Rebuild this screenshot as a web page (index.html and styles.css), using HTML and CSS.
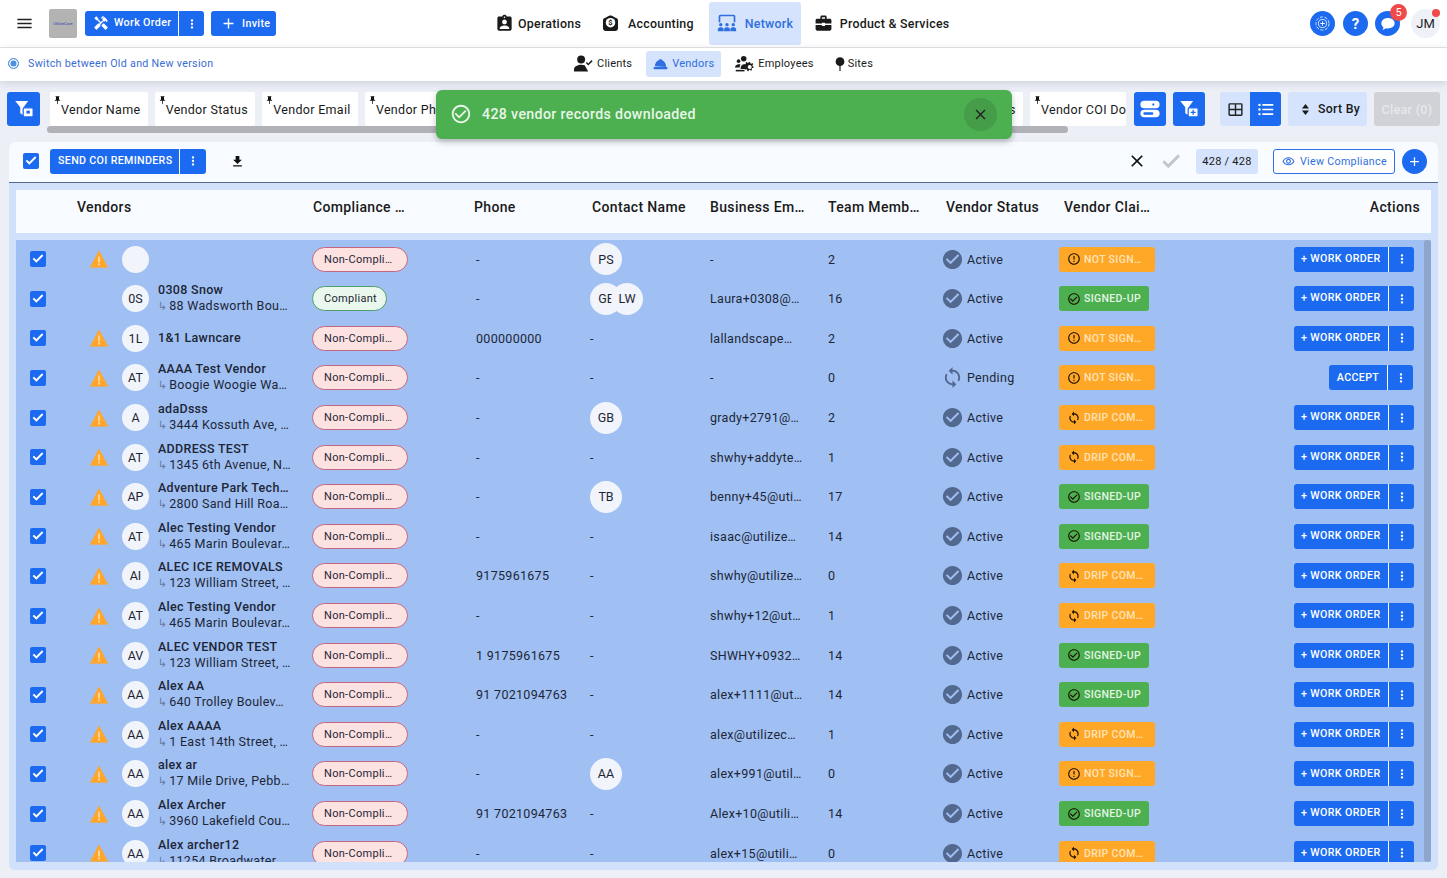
FILE: index.html
```html
<!DOCTYPE html>
<html lang="en">
<head>
<meta charset="utf-8">
<title>Vendors</title>
<link rel="stylesheet" href="styles.css">
</head>
<body>
<svg class="defs" width="0" height="0" aria-hidden="true">
  <symbol id="i-menu" viewBox="0 0 24 24"><path d="M3 18h18v-2H3v2zm0-5h18v-2H3v2zm0-7v2h18V6H3z"/></symbol>
  <symbol id="i-tools" viewBox="0 0 24 24"><path d="M21.67 18.17l-5.3-5.3h-.99l-2.54 2.54v.99l5.3 5.3c.39.39 1.02.39 1.41 0l2.12-2.12c.39-.38.39-1.02 0-1.41z"/><path d="M17.34 10.19l1.41-1.41 2.12 2.12c1.17-1.17 1.17-3.07 0-4.24l-3.54-3.54-1.41 1.41V1.71l-.7-.71-3.54 3.54.71.71h2.83l-1.41 1.41 1.06 1.06-2.89 2.89-4.13-4.13V5.06L4.83 2.04 2 4.87 5.03 7.9h1.41l4.13 4.13-.85.85H7.61l-5.3 5.3c-.39.39-.39 1.02 0 1.41l2.12 2.12c.39.39 1.02.39 1.41 0l5.3-5.3v-2.12l5.15-5.15 1.05 1.05z"/></symbol>
  <symbol id="i-more" viewBox="0 0 24 24"><path d="M12 8c1.1 0 2-.9 2-2s-.9-2-2-2-2 .9-2 2 .9 2 2 2zm0 2c-1.1 0-2 .9-2 2s.9 2 2 2 2-.9 2-2-.9-2-2-2zm0 6c-1.1 0-2 .9-2 2s.9 2 2 2 2-.9 2-2-.9-2-2-2z"/></symbol>
  <symbol id="i-plus" viewBox="0 0 24 24"><path d="M19 13h-6v6h-2v-6H5v-2h6V5h2v6h6v2z"/></symbol>
  <symbol id="i-clip" viewBox="0 0 24 24"><path d="M19 3h-4.18C14.4 1.84 13.3 1 12 1c-1.3 0-2.4.84-2.82 2H5c-1.1 0-2 .9-2 2v14c0 1.1.9 2 2 2h14c1.1 0 2-.9 2-2V5c0-1.1-.9-2-2-2zm-7 0c.55 0 1 .45 1 1s-.45 1-1 1-1-.45-1-1 .45-1 1-1zm0 4c1.66 0 3 1.34 3 3s-1.34 3-3 3-3-1.34-3-3 1.34-3 3-3zm6 12H6v-1.4c0-2 4-3.1 6-3.1s6 1.1 6 3.1V19z"/></symbol>
  <symbol id="i-money" viewBox="0 0 24 24"><path d="M5 5l3-1.6C9 2.8 10.500 2 12 2s3 .8 4 1.400L19 5c1.500.2 2.500 1.300 2.500 2.800V18c0 2-1.500 3.500-3.500 3.500H6C4 21.500 2.500 20 2.500 18V7.800C2.500 6.300 3.500 5.200 5 5z"/><circle cx="12" cy="11" r="6" fill="#fff"/><text x="12" y="14.500" font-size="9.500" font-weight="700" text-anchor="middle" font-family="Roboto, sans-serif">$</text></symbol>
  <symbol id="i-network" viewBox="0 0 24 24"><path d="M2 11V4a2 2 0 0 1 2-2h16a2 2 0 0 1 2 2v7h-2V4H4v7z"/><circle cx="4.500" cy="14" r="2"/><circle cx="12" cy="14" r="2"/><circle cx="19.500" cy="14" r="2"/><path d="M1 22v-2a3 3 0 0 1 3-3h1a3 3 0 0 1 3 3v2zM8.500 22v-2a3 3 0 0 1 3-3h1a3 3 0 0 1 3 3v2zM16 22v-2a3 3 0 0 1 3-3h1a3 3 0 0 1 3 3v2z"/></symbol>
  <symbol id="i-case" viewBox="0 0 24 24"><path d="M20 6h-4V4c0-1.100-.9-2-2-2h-4c-1.100 0-2 .9-2 2v2H4c-1.100 0-2 .9-2 2v4h8v-1h4v1h8V8c0-1.100-.9-2-2-2zM10 4h4v2h-4V4zM2 14v5c0 1.100.9 2 2 2h16c1.100 0 2-.9 2-2v-5h-8v1h-4v-1z"/></symbol>
  <symbol id="i-client" viewBox="0 0 24 24"><circle cx="9" cy="7" r="5"/><path d="M0 22v-3c0-3.300 5-5.500 9-5.500 1.500 0 3 .3 4.500.8L18 22z"/><path d="M15 11.500l1.300-1.300 1.700 1.700 4.200-4.200 1.300 1.300-5.500 5.500z"/></symbol>
  <symbol id="i-hat" viewBox="0 0 24 24"><path d="M3 16.500C3 11.500 6 7.500 10 6.300V5h4v1.300c4 1.200 7 5.200 7 11.200z"/><rect x="1" y="17.500" width="22" height="3.500" rx="1"/></symbol>
  <symbol id="i-team" viewBox="0 0 24 24"><circle cx="11" cy="6" r="3.500"/><circle cx="4.500" cy="9" r="2.300"/><path d="M0 17c0-2.500 2-4.200 5-4.200 1 0 1.700.2 2 .4-.8 1-1 2.400-1 3.800z"/><path d="M7 19c0-3.500 2-6 4.500-6H14l-1 6z"/><path d="M1 20h11v2H1z"/><path fill-rule="evenodd" d="M18 10l1 .2.3 1.500 1.400.6 1.300-.8 1 1.300-1 1.100.2 1.500 1.300.6-.3 1.600h-1.500l-.8 1.300.7 1.300-1.400.9-1.100-1.100-1.500.3-.6 1.400-1.600-.3v-1.500l-1.300-.8-1.300.7-.9-1.400 1.100-1.100-.3-1.500-1.400-.6.3-1.600h1.500l.8-1.300-.7-1.300 1.400-.9 1.100 1.100 1.100-.2zm.6 4a2.500 2.500 0 1 0 .01 0z"/></symbol>
  <symbol id="i-pin" viewBox="0 0 24 24"><circle cx="12" cy="8" r="7.500"/><rect x="11" y="12" width="2" height="12"/></symbol>
  <symbol id="i-push" viewBox="0 0 24 24"><path d="M16 9V4h1V2H7v2h1v5c0 1.660-1.340 3-3 3v2h6v8l1 1 1-1v-8h6v-2c-1.660 0-3-1.340-3-3z"/></symbol>
  <symbol id="i-flock" viewBox="0 0 24 24"><path d="M1.500 2.500H17l-5.500 7.500v9.500l-4-2.500V10z"/><rect x="11" y="10.500" width="12" height="11" rx="1.500" stroke="#1b6af0" stroke-width="1.500"/><rect x="15" y="14" width="4" height="3.500" fill="#1b6af0"/></symbol>
  <symbol id="i-fplus" viewBox="0 0 24 24"><path d="M1.500 2.500H17l-5.500 7.500v9.500l-4-2.500V10z"/><rect x="11" y="10.500" width="12" height="11" rx="1.500" stroke="#1b6af0" stroke-width="1.500"/><path fill="#1b6af0" d="M16.200 13h1.600v2.200H20v1.600h-2.200V19h-1.600v-2.200H14v-1.600h2.200z"/></symbol>
  <symbol id="i-rows" viewBox="0 0 24 24"><path fill-rule="evenodd" d="M5 2h14a4 4 0 0 1 0 9H5a4 4 0 0 1 0-9zm11 3.200a1.300 1.300 0 1 0 .01 0zM5 13h14a4 4 0 0 1 0 9H5a4 4 0 0 1 0-9zm.5 3a1.500 1.500 0 0 0 0 3h9a1.500 1.500 0 0 0 0-3z"/></symbol>
  <symbol id="i-grid" viewBox="0 0 24 24"><path fill-rule="evenodd" d="M4 3h16a2 2 0 0 1 2 2v14a2 2 0 0 1-2 2H4a2 2 0 0 1-2-2V5a2 2 0 0 1 2-2zm0 2v6h7V5zm9 0v6h7V5zM4 13v6h7v-6zm9 0v6h7v-6z"/></symbol>
  <symbol id="i-list" viewBox="0 0 24 24"><circle cx="3.500" cy="5.500" r="1.700"/><circle cx="3.500" cy="12" r="1.700"/><circle cx="3.500" cy="18.500" r="1.700"/><path d="M7.500 4.300H23v2.400H7.500zM7.500 10.800H23v2.400H7.500zM7.500 17.300H23v2.400H7.500z"/></symbol>
  <symbol id="i-sort" viewBox="0 0 24 24"><path d="M12 2l6.500 8h-13zM12 22l-6.500-8h13z"/></symbol>
  <symbol id="i-down" viewBox="0 0 24 24"><path d="M19 9h-4V3H9v6H5l7 7 7-7zM5 18v2h14v-2H5z"/></symbol>
  <symbol id="i-close" viewBox="0 0 24 24"><path d="M19 6.410L17.590 5 12 10.590 6.410 5 5 6.410 10.590 12 5 17.590 6.410 19 12 13.410 17.590 19 19 17.590 13.410 12z"/></symbol>
  <symbol id="i-check" viewBox="0 0 24 24"><path d="M9 16.170L4.830 12l-1.420 1.410L9 19 21 7l-1.410-1.410z" stroke="currentColor" stroke-width="1.200"/></symbol>
  <symbol id="i-box" viewBox="0 0 24 24"><rect x="0" y="0" width="24" height="24" rx="3"/><path fill="#fff" d="M9.500 17.500L4 12l2-2 3.500 3.500L18 5l2 2z"/></symbol>
  <symbol id="i-eye" viewBox="0 0 24 24"><path d="M12 6c3.790 0 7.170 2.130 8.820 5.500C19.170 14.870 15.790 17 12 17s-7.170-2.130-8.820-5.500C4.830 8.130 8.210 6 12 6m0-2C7 4 2.730 7.110 1 11.500 2.730 15.890 7 19 12 19s9.270-3.110 11-7.500C21.270 7.110 17 4 12 4zm0 5c1.380 0 2.500 1.120 2.500 2.500S13.380 14 12 14s-2.500-1.120-2.500-2.500S10.620 9 12 9m0-2c-2.480 0-4.500 2.020-4.500 4.500S9.520 16 12 16s4.500-2.020 4.500-4.500S14.480 7 12 7z"/></symbol>
  <symbol id="i-warn" viewBox="0 0 24 24"><path d="M12 1.500L.5 23h23z" stroke="currentColor" stroke-width="1" stroke-linejoin="round"/><path fill="#ffd596" d="M10.700 8.500h2.600v8h-2.600zM10.700 18h2.600v2.600h-2.600z"/></symbol>
  <symbol id="i-ok" viewBox="0 0 24 24"><path d="M12 2C6.480 2 2 6.480 2 12s4.480 10 10 10 10-4.480 10-10S17.520 2 12 2zm-2 15l-5-5 1.410-1.410L10 14.170l7.590-7.590L19 8l-9 9z"/></symbol>
  <symbol id="i-okline" viewBox="0 0 24 24"><path d="M16.590 7.580L10 14.170l-3.590-3.580L5 12l5 5 8-8zM12 2C6.480 2 2 6.480 2 12s4.480 10 10 10 10-4.480 10-10S17.520 2 12 2zm0 18c-4.420 0-8-3.580-8-8s3.580-8 8-8 8 3.580 8 8-3.580 8-8 8z"/></symbol>
  <symbol id="i-err" viewBox="0 0 24 24"><path d="M11 15h2v2h-2zm0-8h2v6h-2zm.990-5C6.470 2 2 6.480 2 12s4.470 10 9.990 10C17.520 22 22 17.520 22 12S17.520 2 11.990 2zM12 20c-4.420 0-8-3.580-8-8s3.580-8 8-8 8 3.580 8 8-3.580 8-8 8z"/></symbol>
  <symbol id="i-sync" viewBox="0 0 24 24"><path d="M12 4V1L8 5l4 4V6c3.310 0 6 2.690 6 6 0 1.010-.25 1.970-.7 2.800l1.460 1.460C19.540 15.030 20 13.570 20 12c0-4.420-3.580-8-8-8zm0 14c-3.310 0-6-2.690-6-6 0-1.010.25-1.970.7-2.800L5.240 7.740C4.460 8.970 4 10.430 4 12c0 4.420 3.580 8 8 8v3l4-4-4-4v3z"/></symbol>
  <symbol id="i-chat" viewBox="0 0 24 24"><path d="M12 3c5.500 0 10 3.400 10 7.800s-4.500 7.800-10 7.800c-1 0-2-.1-2.900-.3L4 21l1.200-4.200C3.200 15.400 2 13.200 2 10.800 2 6.400 6.500 3 12 3z"/></symbol>
  <symbol id="i-target" viewBox="0 0 24 24"><circle cx="12" cy="12" r="10.500" fill="none" stroke="currentColor" stroke-width="1.300" stroke-dasharray="5 2.500"/><circle cx="12" cy="12" r="6.500" fill="none" stroke="currentColor" stroke-width="1.300"/><path d="M11.300 8.500h1.400v2.800h2.800v1.400h-2.800v2.800h-1.400v-2.800H8.500v-1.400h2.800z"/></symbol>
</svg>

<header class="topbar">
  <div class="top-left">
    <svg class="ico menu-ico"><use href="#i-menu"/></svg>
    <div class="logo"><span>UtilizeCore</span></div>
    <div class="split top-split">
      <span class="split-main"><svg class="ico wo-ico"><use href="#i-tools"/></svg>Work Order</span>
      <span class="split-more"><svg class="ico more-ico"><use href="#i-more"/></svg></span>
    </div>
    <div class="invite"><svg class="ico plus-ico"><use href="#i-plus"/></svg>Invite</div>
  </div>
  <nav class="main-nav">
    <a class="nav-item nav-ops"><svg class="ico nav-ico"><use href="#i-clip"/></svg>Operations</a>
    <a class="nav-item nav-acc"><svg class="ico nav-ico"><use href="#i-money"/></svg>Accounting</a>
    <a class="nav-item nav-net is-active"><svg class="ico nav-ico"><use href="#i-network"/></svg>Network</a>
    <a class="nav-item nav-prod"><svg class="ico nav-ico"><use href="#i-case"/></svg>Product &amp; Services</a>
  </nav>
  <div class="top-right">
    <span class="round"><svg class="ico target-ico"><use href="#i-target"/></svg></span>
    <span class="round round-help">?</span>
    <span class="round chat"><svg class="ico chat-ico"><use href="#i-chat"/></svg><b class="badge">5</b></span>
    <span class="me">JM<i class="dot"></i></span>
  </div>
</header>

<div class="subbar">
  <div class="switch"><span class="radio"></span>Switch between Old and New version</div>
  <nav class="sub-nav">
    <a class="sub-item"><svg class="ico sub-ico"><use href="#i-client"/></svg>Clients</a>
    <a class="sub-item is-active"><svg class="ico sub-ico"><use href="#i-hat"/></svg>Vendors</a>
    <a class="sub-item"><svg class="ico sub-ico"><use href="#i-team"/></svg>Employees</a>
    <a class="sub-item sub-sites"><svg class="ico pin-ico"><use href="#i-pin"/></svg>Sites</a>
  </nav>
</div>

<section class="filters">
  <button class="sq"><svg class="ico sq-ico"><use href="#i-flock"/></svg></button>
  <div class="chips-wrap">
    <div class="chips">
      <div class="chip-group">
        <span class="chip"><svg class="ico push"><use href="#i-push"/></svg>Vendor Name</span>
        <span class="chip"><svg class="ico push"><use href="#i-push"/></svg>Vendor Status</span>
        <span class="chip"><svg class="ico push"><use href="#i-push"/></svg>Vendor Email</span>
        <span class="chip"><svg class="ico push"><use href="#i-push"/></svg>Vendor Phone</span>
      </div>
      <div class="chip-group">
        <span class="chip"><svg class="ico push"><use href="#i-push"/></svg>Vendor Address</span>
        <span class="chip chip-cut"><svg class="ico push"><use href="#i-push"/></svg>Vendor COI Do</span>
      </div>
    </div>
    <div class="hscroll"></div>
  </div>
  <button class="sq sq-a"><svg class="ico sq-ico"><use href="#i-rows"/></svg></button>
  <button class="sq sq-b"><svg class="ico sq-ico"><use href="#i-fplus"/></svg></button>
  <div class="toggle">
    <span class="tg"><svg class="ico tg-ico"><use href="#i-grid"/></svg></span>
    <span class="tg tg-on"><svg class="ico tg-ico"><use href="#i-list"/></svg></span>
  </div>
  <div class="sort"><svg class="ico sort-ico"><use href="#i-sort"/></svg>Sort By</div>
  <div class="clear">Clear (0)</div>
</section>

<div class="toast">
  <svg class="ico toast-ico"><use href="#i-okline"/></svg>
  <span class="toast-text">428 vendor records downloaded</span>
  <span class="toast-x"><svg class="ico x-ico"><use href="#i-close"/></svg></span>
</div>

<main class="panel">
  <div class="tools">
    <svg class="ico box tool-box"><use href="#i-box"/></svg>
    <div class="split coi">
      <span class="split-main">SEND COI REMINDERS</span>
      <span class="split-more"><svg class="ico more-ico"><use href="#i-more"/></svg></span>
    </div>
    <svg class="ico dl"><use href="#i-down"/></svg>
    <div class="tools-right">
      <svg class="ico t-x"><use href="#i-close"/></svg>
      <svg class="ico t-ok"><use href="#i-check"/></svg>
      <span class="count">428 / 428</span>
      <span class="view"><svg class="ico eye"><use href="#i-eye"/></svg>View Compliance</span>
      <span class="round add"><svg class="ico add-ico"><use href="#i-plus"/></svg></span>
    </div>
  </div>
  <div class="tbl">
    <div class="thead">
      <span>Vendors</span><span>Compliance …</span><span>Phone</span><span>Contact Name</span><span>Business Em…</span><span>Team Memb…</span><span>Vendor Status</span><span>Vendor Clai…</span><span class="th-act">Actions</span>
    </div>
    <div class="tbody">
      <div class="vscroll"></div>

      <div class="row">
        <svg class="ico box"><use href="#i-box"/></svg>
        <svg class="ico warn"><use href="#i-warn"/></svg>
        <span class="av"></span>
        <div class="who"></div>
        <div><span class="pill pill-no">Non-Compli…</span></div>
        <div class="c-phone">-</div>
        <div class="c-contact"><span class="cav">PS</span></div>
        <div>-</div><div>2</div>
        <div class="stat"><svg class="ico st-ok"><use href="#i-ok"/></svg>Active</div>
        <div><span class="claim cl-or"><svg class="ico cl-ico"><use href="#i-err"/></svg>NOT SIGN…</span></div>
        <div class="act"><div class="split"><span class="split-main">+ WORK ORDER</span><span class="split-more"><svg class="ico more-ico"><use href="#i-more"/></svg></span></div></div>
      </div>

      <div class="row">
        <svg class="ico box"><use href="#i-box"/></svg>
        <span></span>
        <span class="av">0S</span>
        <div class="who"><b>0308 Snow</b><small><i>↳</i>88 Wadsworth Bou…</small></div>
        <div><span class="pill pill-ok">Compliant</span></div>
        <div class="c-phone">-</div>
        <div class="c-contact"><span class="cav">GE</span><span class="cav cav-2">LW</span></div>
        <div>Laura+0308@…</div><div>16</div>
        <div class="stat"><svg class="ico st-ok"><use href="#i-ok"/></svg>Active</div>
        <div><span class="claim cl-gr"><svg class="ico cl-ico"><use href="#i-okline"/></svg>SIGNED-UP</span></div>
        <div class="act"><div class="split"><span class="split-main">+ WORK ORDER</span><span class="split-more"><svg class="ico more-ico"><use href="#i-more"/></svg></span></div></div>
      </div>

      <div class="row">
        <svg class="ico box"><use href="#i-box"/></svg>
        <svg class="ico warn"><use href="#i-warn"/></svg>
        <span class="av">1L</span>
        <div class="who"><b>1&amp;1 Lawncare</b></div>
        <div><span class="pill pill-no">Non-Compli…</span></div>
        <div class="c-phone">000000000</div>
        <div class="c-contact">-</div>
        <div>lallandscape…</div><div>2</div>
        <div class="stat"><svg class="ico st-ok"><use href="#i-ok"/></svg>Active</div>
        <div><span class="claim cl-or"><svg class="ico cl-ico"><use href="#i-err"/></svg>NOT SIGN…</span></div>
        <div class="act"><div class="split"><span class="split-main">+ WORK ORDER</span><span class="split-more"><svg class="ico more-ico"><use href="#i-more"/></svg></span></div></div>
      </div>

      <div class="row">
        <svg class="ico box"><use href="#i-box"/></svg>
        <svg class="ico warn"><use href="#i-warn"/></svg>
        <span class="av">AT</span>
        <div class="who"><b>AAAA Test Vendor</b><small><i>↳</i>Boogie Woogie Wa…</small></div>
        <div><span class="pill pill-no">Non-Compli…</span></div>
        <div class="c-phone">-</div>
        <div class="c-contact">-</div>
        <div>-</div><div>0</div>
        <div class="stat"><svg class="ico st-pend"><use href="#i-sync"/></svg>Pending</div>
        <div><span class="claim cl-or"><svg class="ico cl-ico"><use href="#i-err"/></svg>NOT SIGN…</span></div>
        <div class="act"><div class="split split-accept"><span class="split-main">ACCEPT</span><span class="split-more"><svg class="ico more-ico"><use href="#i-more"/></svg></span></div></div>
      </div>

      <div class="row">
        <svg class="ico box"><use href="#i-box"/></svg>
        <svg class="ico warn"><use href="#i-warn"/></svg>
        <span class="av">A</span>
        <div class="who"><b>adaDsss</b><small><i>↳</i>3444 Kossuth Ave, …</small></div>
        <div><span class="pill pill-no">Non-Compli…</span></div>
        <div class="c-phone">-</div>
        <div class="c-contact"><span class="cav">GB</span></div>
        <div>grady+2791@…</div><div>2</div>
        <div class="stat"><svg class="ico st-ok"><use href="#i-ok"/></svg>Active</div>
        <div><span class="claim cl-or"><svg class="ico cl-ico"><use href="#i-sync"/></svg>DRIP COM…</span></div>
        <div class="act"><div class="split"><span class="split-main">+ WORK ORDER</span><span class="split-more"><svg class="ico more-ico"><use href="#i-more"/></svg></span></div></div>
      </div>

      <div class="row">
        <svg class="ico box"><use href="#i-box"/></svg>
        <svg class="ico warn"><use href="#i-warn"/></svg>
        <span class="av">AT</span>
        <div class="who"><b>ADDRESS TEST</b><small><i>↳</i>1345 6th Avenue, N…</small></div>
        <div><span class="pill pill-no">Non-Compli…</span></div>
        <div class="c-phone">-</div>
        <div class="c-contact">-</div>
        <div>shwhy+addyte…</div><div>1</div>
        <div class="stat"><svg class="ico st-ok"><use href="#i-ok"/></svg>Active</div>
        <div><span class="claim cl-or"><svg class="ico cl-ico"><use href="#i-sync"/></svg>DRIP COM…</span></div>
        <div class="act"><div class="split"><span class="split-main">+ WORK ORDER</span><span class="split-more"><svg class="ico more-ico"><use href="#i-more"/></svg></span></div></div>
      </div>

      <div class="row">
        <svg class="ico box"><use href="#i-box"/></svg>
        <svg class="ico warn"><use href="#i-warn"/></svg>
        <span class="av">AP</span>
        <div class="who"><b>Adventure Park Tech…</b><small><i>↳</i>2800 Sand Hill Roa…</small></div>
        <div><span class="pill pill-no">Non-Compli…</span></div>
        <div class="c-phone">-</div>
        <div class="c-contact"><span class="cav">TB</span></div>
        <div>benny+45@uti…</div><div>17</div>
        <div class="stat"><svg class="ico st-ok"><use href="#i-ok"/></svg>Active</div>
        <div><span class="claim cl-gr"><svg class="ico cl-ico"><use href="#i-okline"/></svg>SIGNED-UP</span></div>
        <div class="act"><div class="split"><span class="split-main">+ WORK ORDER</span><span class="split-more"><svg class="ico more-ico"><use href="#i-more"/></svg></span></div></div>
      </div>

      <div class="row">
        <svg class="ico box"><use href="#i-box"/></svg>
        <svg class="ico warn"><use href="#i-warn"/></svg>
        <span class="av">AT</span>
        <div class="who"><b>Alec Testing Vendor</b><small><i>↳</i>465 Marin Boulevar…</small></div>
        <div><span class="pill pill-no">Non-Compli…</span></div>
        <div class="c-phone">-</div>
        <div class="c-contact">-</div>
        <div>isaac@utilize…</div><div>14</div>
        <div class="stat"><svg class="ico st-ok"><use href="#i-ok"/></svg>Active</div>
        <div><span class="claim cl-gr"><svg class="ico cl-ico"><use href="#i-okline"/></svg>SIGNED-UP</span></div>
        <div class="act"><div class="split"><span class="split-main">+ WORK ORDER</span><span class="split-more"><svg class="ico more-ico"><use href="#i-more"/></svg></span></div></div>
      </div>

      <div class="row">
        <svg class="ico box"><use href="#i-box"/></svg>
        <svg class="ico warn"><use href="#i-warn"/></svg>
        <span class="av">AI</span>
        <div class="who"><b>ALEC ICE REMOVALS</b><small><i>↳</i>123 William Street, …</small></div>
        <div><span class="pill pill-no">Non-Compli…</span></div>
        <div class="c-phone">9175961675</div>
        <div class="c-contact">-</div>
        <div>shwhy@utilize…</div><div>0</div>
        <div class="stat"><svg class="ico st-ok"><use href="#i-ok"/></svg>Active</div>
        <div><span class="claim cl-or"><svg class="ico cl-ico"><use href="#i-sync"/></svg>DRIP COM…</span></div>
        <div class="act"><div class="split"><span class="split-main">+ WORK ORDER</span><span class="split-more"><svg class="ico more-ico"><use href="#i-more"/></svg></span></div></div>
      </div>

      <div class="row">
        <svg class="ico box"><use href="#i-box"/></svg>
        <svg class="ico warn"><use href="#i-warn"/></svg>
        <span class="av">AT</span>
        <div class="who"><b>Alec Testing Vendor</b><small><i>↳</i>465 Marin Boulevar…</small></div>
        <div><span class="pill pill-no">Non-Compli…</span></div>
        <div class="c-phone">-</div>
        <div class="c-contact">-</div>
        <div>shwhy+12@ut…</div><div>1</div>
        <div class="stat"><svg class="ico st-ok"><use href="#i-ok"/></svg>Active</div>
        <div><span class="claim cl-or"><svg class="ico cl-ico"><use href="#i-sync"/></svg>DRIP COM…</span></div>
        <div class="act"><div class="split"><span class="split-main">+ WORK ORDER</span><span class="split-more"><svg class="ico more-ico"><use href="#i-more"/></svg></span></div></div>
      </div>

      <div class="row">
        <svg class="ico box"><use href="#i-box"/></svg>
        <svg class="ico warn"><use href="#i-warn"/></svg>
        <span class="av">AV</span>
        <div class="who"><b>ALEC VENDOR TEST</b><small><i>↳</i>123 William Street, …</small></div>
        <div><span class="pill pill-no">Non-Compli…</span></div>
        <div class="c-phone">1 9175961675</div>
        <div class="c-contact">-</div>
        <div>SHWHY+0932…</div><div>14</div>
        <div class="stat"><svg class="ico st-ok"><use href="#i-ok"/></svg>Active</div>
        <div><span class="claim cl-gr"><svg class="ico cl-ico"><use href="#i-okline"/></svg>SIGNED-UP</span></div>
        <div class="act"><div class="split"><span class="split-main">+ WORK ORDER</span><span class="split-more"><svg class="ico more-ico"><use href="#i-more"/></svg></span></div></div>
      </div>

      <div class="row">
        <svg class="ico box"><use href="#i-box"/></svg>
        <svg class="ico warn"><use href="#i-warn"/></svg>
        <span class="av">AA</span>
        <div class="who"><b>Alex AA</b><small><i>↳</i>640 Trolley Boulev…</small></div>
        <div><span class="pill pill-no">Non-Compli…</span></div>
        <div class="c-phone">91 7021094763</div>
        <div class="c-contact">-</div>
        <div>alex+1111@ut…</div><div>14</div>
        <div class="stat"><svg class="ico st-ok"><use href="#i-ok"/></svg>Active</div>
        <div><span class="claim cl-gr"><svg class="ico cl-ico"><use href="#i-okline"/></svg>SIGNED-UP</span></div>
        <div class="act"><div class="split"><span class="split-main">+ WORK ORDER</span><span class="split-more"><svg class="ico more-ico"><use href="#i-more"/></svg></span></div></div>
      </div>

      <div class="row">
        <svg class="ico box"><use href="#i-box"/></svg>
        <svg class="ico warn"><use href="#i-warn"/></svg>
        <span class="av">AA</span>
        <div class="who"><b>Alex AAAA</b><small><i>↳</i>1 East 14th Street, …</small></div>
        <div><span class="pill pill-no">Non-Compli…</span></div>
        <div class="c-phone">-</div>
        <div class="c-contact">-</div>
        <div>alex@utilizec…</div><div>1</div>
        <div class="stat"><svg class="ico st-ok"><use href="#i-ok"/></svg>Active</div>
        <div><span class="claim cl-or"><svg class="ico cl-ico"><use href="#i-sync"/></svg>DRIP COM…</span></div>
        <div class="act"><div class="split"><span class="split-main">+ WORK ORDER</span><span class="split-more"><svg class="ico more-ico"><use href="#i-more"/></svg></span></div></div>
      </div>

      <div class="row">
        <svg class="ico box"><use href="#i-box"/></svg>
        <svg class="ico warn"><use href="#i-warn"/></svg>
        <span class="av">AA</span>
        <div class="who"><b>alex ar</b><small><i>↳</i>17 Mile Drive, Pebb…</small></div>
        <div><span class="pill pill-no">Non-Compli…</span></div>
        <div class="c-phone">-</div>
        <div class="c-contact"><span class="cav">AA</span></div>
        <div>alex+991@util…</div><div>0</div>
        <div class="stat"><svg class="ico st-ok"><use href="#i-ok"/></svg>Active</div>
        <div><span class="claim cl-or"><svg class="ico cl-ico"><use href="#i-err"/></svg>NOT SIGN…</span></div>
        <div class="act"><div class="split"><span class="split-main">+ WORK ORDER</span><span class="split-more"><svg class="ico more-ico"><use href="#i-more"/></svg></span></div></div>
      </div>

      <div class="row">
        <svg class="ico box"><use href="#i-box"/></svg>
        <svg class="ico warn"><use href="#i-warn"/></svg>
        <span class="av">AA</span>
        <div class="who"><b>Alex Archer</b><small><i>↳</i>3960 Lakefield Cou…</small></div>
        <div><span class="pill pill-no">Non-Compli…</span></div>
        <div class="c-phone">91 7021094763</div>
        <div class="c-contact">-</div>
        <div>Alex+10@utili…</div><div>14</div>
        <div class="stat"><svg class="ico st-ok"><use href="#i-ok"/></svg>Active</div>
        <div><span class="claim cl-gr"><svg class="ico cl-ico"><use href="#i-okline"/></svg>SIGNED-UP</span></div>
        <div class="act"><div class="split"><span class="split-main">+ WORK ORDER</span><span class="split-more"><svg class="ico more-ico"><use href="#i-more"/></svg></span></div></div>
      </div>

      <div class="row">
        <svg class="ico box"><use href="#i-box"/></svg>
        <svg class="ico warn"><use href="#i-warn"/></svg>
        <span class="av">AA</span>
        <div class="who"><b>Alex archer12</b><small><i>↳</i>11254 Broadwater…</small></div>
        <div><span class="pill pill-no">Non-Compli…</span></div>
        <div class="c-phone">-</div>
        <div class="c-contact">-</div>
        <div>alex+15@utili…</div><div>0</div>
        <div class="stat"><svg class="ico st-ok"><use href="#i-ok"/></svg>Active</div>
        <div><span class="claim cl-or"><svg class="ico cl-ico"><use href="#i-sync"/></svg>DRIP COM…</span></div>
        <div class="act"><div class="split"><span class="split-main">+ WORK ORDER</span><span class="split-more"><svg class="ico more-ico"><use href="#i-more"/></svg></span></div></div>
      </div>
    </div>
  </div>
</main>
</body>
</html>
```

FILE: styles.css
```css
* { box-sizing: border-box; }
html, body { margin: 0; height: 878px; overflow: hidden; }
body {
  position: relative;
  background: #eceff6;
  font-family: Roboto, "Liberation Sans", sans-serif;
  font-size: 13px;
  letter-spacing: .3px;
  color: #1d2433;
}
.defs { position: absolute; }
.ico { display: block; fill: currentColor; flex: none; }

/* top bar */
.topbar {
  display: flex;
  align-items: center;
  height: 48px;
  background: #fff;
  border-bottom: 1px solid #e3e4e6;
  color: #111;
}
.top-left { display: flex; align-items: center; width: 495px; padding-left: 15px; }
.menu-ico { width: 19px; height: 19px; color: #222; }
.logo {
  width: 28px; height: 29px; margin-left: 15px; background: #b3b3b3; border-radius: 2px;
  display: flex; align-items: center; justify-content: center; overflow: hidden;
}
.logo span { font-size: 4px; letter-spacing: 0; color: #2a3fb0; white-space: nowrap; }
.split {
  display: inline-flex; height: 25px; color: #fff; border-radius: 3px; background: #1b6af0;
  font-size: 11px; font-weight: 500; letter-spacing: .35px; line-height: 1;
}
.split-main { display: flex; align-items: center; padding: 0 8px; white-space: nowrap; }
.split-more { display: flex; align-items: center; justify-content: center; width: 26px; border-left: 1px solid #fff; }
.more-ico { width: 14px; height: 14px; }
.top-split { margin-left: 8px; font-size: 10.700px; }
.top-split .split-main { width: 93px; padding: 0 0 1px 8px; }
.wo-ico { width: 16px; height: 16px; margin-right: 5px; }
.invite {
  display: flex; align-items: center; height: 25px; width: 65px; margin-left: 7px; padding: 0 0 1px 9px;
  border-radius: 3px; background: #1b6af0; color: #fff; font-size: 10.700px; font-weight: 500; letter-spacing: .35px;
}
.plus-ico { width: 17px; height: 17px; margin-right: 5px; }

.main-nav { display: flex; align-items: center; height: 43px; font-size: 12.400px; font-weight: 500; letter-spacing: .25px; margin-top: -1px; }
.nav-item { display: flex; align-items: center; height: 43px; white-space: nowrap; color: #1a1a1a; }
.nav-ico { width: 19px; height: 19px; margin-right: 7px; }
.nav-ops .nav-ico { margin-right: 4px; }
.nav-acc { margin-left: 20px; }
.nav-acc .nav-ico { margin-right: 8px; }
.nav-net { margin-left: 15px; padding: 0 8px; width: 92px; border-radius: 3px; background: #d5e3fc; color: #2f6fe0; }
.nav-net .nav-ico { width: 20px; height: 20px; margin-right: 8px; }
.nav-prod { margin-left: 13px; }
.top-right { display: flex; align-items: center; margin-left: auto; padding-right: 7px; }
.round {
  position: relative; display: flex; align-items: center; justify-content: center;
  width: 25px; height: 25px; border-radius: 50%; background: #1b6af0; color: #fff; margin-right: 8px;
}
.target-ico { width: 15px; height: 15px; }
.round-help { margin-right: 7px; font-size: 15px; font-weight: 700; letter-spacing: 0; }
.chat { margin-right: 11px; }
.chat-ico { width: 16px; height: 16px; }
.badge {
  position: absolute; top: -7px; right: -7px; width: 17px; height: 17px; border-radius: 50%;
  background: #f04a4a; color: #fff; font-size: 11px; font-weight: 400; text-align: center; line-height: 17px; letter-spacing: 0;
}
.me {
  position: relative; display: flex; align-items: center; justify-content: center;
  width: 29px; height: 29px; border-radius: 50%; background: #eef1f8; font-size: 13px; letter-spacing: 0; color: #222;
}
.dot { position: absolute; top: 0; right: 0; width: 8px; height: 8px; border-radius: 50%; background: #f04a4a; }

/* sub bar */
.subbar {
  position: relative; display: flex; align-items: center; height: 33px; padding-bottom: 2px; background: #fff;
  box-shadow: 0 2px 8px rgba(60, 70, 100, .18);
}
.switch { display: flex; align-items: center; width: 574px; padding-left: 8px; font-size: 10.700px; color: #3a6cd4; letter-spacing: .3px; }
.radio {
  width: 11px; height: 11px; margin-right: 9px; border-radius: 50%;
  border: 1px solid #4a90e2; background: #4a90e2; box-shadow: inset 0 0 0 1.500px #fff;
}
.sub-nav { display: flex; align-items: center; font-size: 11px; letter-spacing: .22px; }
.sub-item { display: flex; align-items: center; height: 26px; white-space: nowrap; color: #1a1a1a; }
.sub-ico { width: 19px; height: 19px; margin-right: 4px; }
.sub-item.is-active { margin: 0 14px; padding: 0 7px; width: 75px; border-radius: 3px; background: #d5e3fc; color: #2f6fe0; }
.sub-item.is-active .sub-ico { width: 15px; height: 15px; }
.sub-sites { margin-left: 19px; }
.pin-ico { width: 14px; height: 16px; margin-right: 1px; }

/* filters */
.filters { display: flex; align-items: flex-start; height: 61px; padding: 11px 7px 0 7px; }
.sq {
  display: flex; align-items: center; justify-content: center; flex: none; width: 33px; height: 34px; padding: 0;
  border: 0; border-radius: 3px; background: #1b6af0; color: #fff;
}
.sq-ico { width: 20px; height: 20px; }
.sq-a { width: 32px; margin-left: 8px; }
.sq-b { width: 32px; margin-left: 7px; }
.chips-wrap { width: 1079px; margin-left: 7px; flex: none; }
.chips { display: flex; justify-content: space-between; padding-left: 3px; }
.chip-group { display: flex; gap: 7px; }
.chip {
  position: relative; display: flex; align-items: center; height: 34px; padding: 0 7.300px 0 11px;
  background: #fff; border-radius: 2px; font-size: 12.500px; letter-spacing: .3px; color: #1a1a1a; white-space: nowrap;
}
.chip-cut { width: 96px; overflow: hidden; padding-right: 0; }
.push { position: absolute; left: 3px; top: 3px; width: 9px; height: 10px; color: #111; }
.hscroll { height: 7px; width: 1021px; border-radius: 4px; background: #b1b2b8; }
.toggle { display: flex; margin-left: 15px; height: 34px; }
.tg { display: flex; align-items: center; justify-content: center; width: 30px; background: #d5e3fc; border-radius: 3px 0 0 3px; color: #222; }
.tg-on { width: 31px; background: #1b6af0; color: #fff; border-radius: 0 3px 3px 0; }
.tg-ico { width: 17px; height: 17px; }
.sort {
  display: flex; align-items: center; width: 79px; height: 34px; margin-left: 7px; padding-left: 11px;
  border-radius: 3px; background: #d5e3fc; font-size: 12.300px; font-weight: 500; color: #1a1a1a;
}
.sort-ico { width: 13px; height: 13px; margin-right: 6px; }
.clear {
  display: flex; align-items: center; justify-content: center; width: 66px; height: 34px; margin-left: 7px;
  border-radius: 3px; background: #d0d2d7; color: #e6e8ec; font-size: 12.500px; font-weight: 500;
}

/* toast */
.toast {
  position: absolute; left: 436px; top: 90px; display: flex; align-items: center; width: 576px; height: 49px;
  padding: 0 16px 2px; border-radius: 6px; background: #4caf50; color: #fff;
  box-shadow: 0 3px 6px rgba(0, 0, 0, .25);
}
.toast-ico { width: 22px; height: 22px; margin-left: -2px; color: #eaf6ea; }
.toast-text { margin-left: 10px; font-size: 14.200px; font-weight: 500; letter-spacing: .35px; color: #e9f6e9; }
.toast-x {
  display: flex; align-items: center; justify-content: center; width: 33px; height: 33px; margin-left: auto; margin-right: -1px; margin-top: 2px;
  border-radius: 50%; background: #459c49; color: #222;
}
.x-ico { width: 17px; height: 17px; }

/* panel */
.panel { margin: 0 9px; height: 728px; border-radius: 6px; overflow: hidden; background: #d1e0fb; }
.tools {
  display: flex; align-items: center; height: 41px; padding: 0 11px 2px 14px; background: #f8fbff;
  border-bottom: 1px solid #57688f;
}
.box { width: 16px; height: 16px; color: #1b6af0; }
.coi { margin-left: 11px; }
.coi .split-main { width: 129px; padding: 0 8px; font-size: 10.700px; letter-spacing: .32px; }
.coi .split-more { width: 27px; }
.dl { width: 15px; height: 15px; margin-left: 24px; color: #111; }
.tools-right { display: flex; align-items: center; margin-left: auto; }
.t-x { width: 20px; height: 20px; color: #111; }
.t-ok { width: 22px; height: 22px; margin-left: 13px; color: #c3c6cb; }
.count {
  display: flex; align-items: center; justify-content: center; width: 62px; height: 25px; margin-left: 14px;
  border-radius: 3px; background: #d5e3fc; font-size: 11px; letter-spacing: .25px; color: #1a1a1a;
}
.view {
  display: flex; align-items: center; width: 122px; height: 25px; margin-left: 15px; padding-left: 8px;
  border: 1px solid #2f6fe0; border-radius: 3px; color: #2f6fe0; font-size: 10.700px; letter-spacing: .3px; background: #fff;
}
.eye { width: 13px; height: 13px; margin-right: 5px; }
.add { margin: 0 0 0 7px; }
.add-ico { width: 15px; height: 15px; }

/* table */
.tbl { padding: 7px 7px 0; }
.thead {
  display: grid; align-items: center; height: 43px; padding: 0 0 9px 61px;
  grid-template-columns: 236px 161px 118px 118px 118px 118px 118px 118px 1fr;
  background: #f8fbff; font-size: 14px; font-weight: 500; letter-spacing: .35px; color: #1a1a1a;
}
.th-act { text-align: right; padding-right: 11px; }
.tbody { position: relative; height: 622px; margin-top: 7px; background: #a0c0f4; overflow: hidden; }
.vscroll { position: absolute; right: 0; top: 0; width: 7px; height: 622px; border-radius: 4px; background: #8ea5cc; }
.row {
  display: grid; align-items: center; height: 39.600px;
  grid-template-columns: 67px 32px 43px 154px 164px 114px 120px 118px 115px 116px 110px 1fr;
  font-size: 12.500px; letter-spacing: .3px; color: #1d2636; white-space: nowrap;
}
.vscroll + .row { margin-top: -.6px; }
.row > .box { margin-left: 14px; }
.warn { width: 18px; height: 18px; margin-left: 7px; color: #ffa62b; }
.av {
  display: flex; align-items: center; justify-content: center; width: 27px; height: 27px; margin-left: 7px;
  border-radius: 50%; background: #f1f4fb; font-size: 12.500px; letter-spacing: 0;
}
.who { display: flex; flex-direction: column; line-height: 16px; overflow: hidden; }
.who b { font-weight: 500; font-size: 12.500px; letter-spacing: .3px; }
.who small { font-size: 12.500px; letter-spacing: .3px; }
.who i { font-style: normal; font-size: 11px; color: #66789a; margin-right: 2px; letter-spacing: 0; font-family: "DejaVu Sans", sans-serif; }
.pill {
  display: inline-flex; align-items: center; height: 25px; padding: 0 11px; border-radius: 13px;
  font-size: 11px; letter-spacing: .3px; vertical-align: top;
}
.pill-no { width: 96px; background: #fde2e2; border: 1px solid #c4667f; }
.pill-ok { width: 75px; background: #e9f7ec; border: 1px solid #4f9f6d; }
.c-contact { display: flex; align-items: center; }
.cav {
  display: flex; align-items: center; justify-content: center; flex: none; width: 32px; height: 32px;
  border-radius: 50%; background: #f1f4fb; font-size: 12.500px; letter-spacing: 0;
}
.cav-2 { margin-left: -11px; }
.stat { display: flex; align-items: center; }
.st-ok, .st-pend { width: 23px; height: 23px; margin-right: 3px; margin-left: -2px; color: #53688f; }
.claim {
  display: inline-flex; align-items: center; height: 25px; padding: 0 8px; border-radius: 3px; vertical-align: top;
  font-size: 10.500px; font-weight: 500; letter-spacing: .35px;
}
.cl-or { width: 96px; background: #ffa726; color: #ffe4ba; }
.cl-gr { width: 90px; background: #4caf50; color: #e5f5e6; }
.cl-ico { width: 14px; height: 14px; margin-right: 3px; color: #1d1200; }
.act { display: flex; justify-content: flex-end; padding-right: 17px; }
.act .split-main { width: 94px; padding: 0 7px; font-size: 10.700px; }
.split-accept { margin-right: 1px; }
.act .split-accept .split-main { width: 58px; justify-content: center; }
```
